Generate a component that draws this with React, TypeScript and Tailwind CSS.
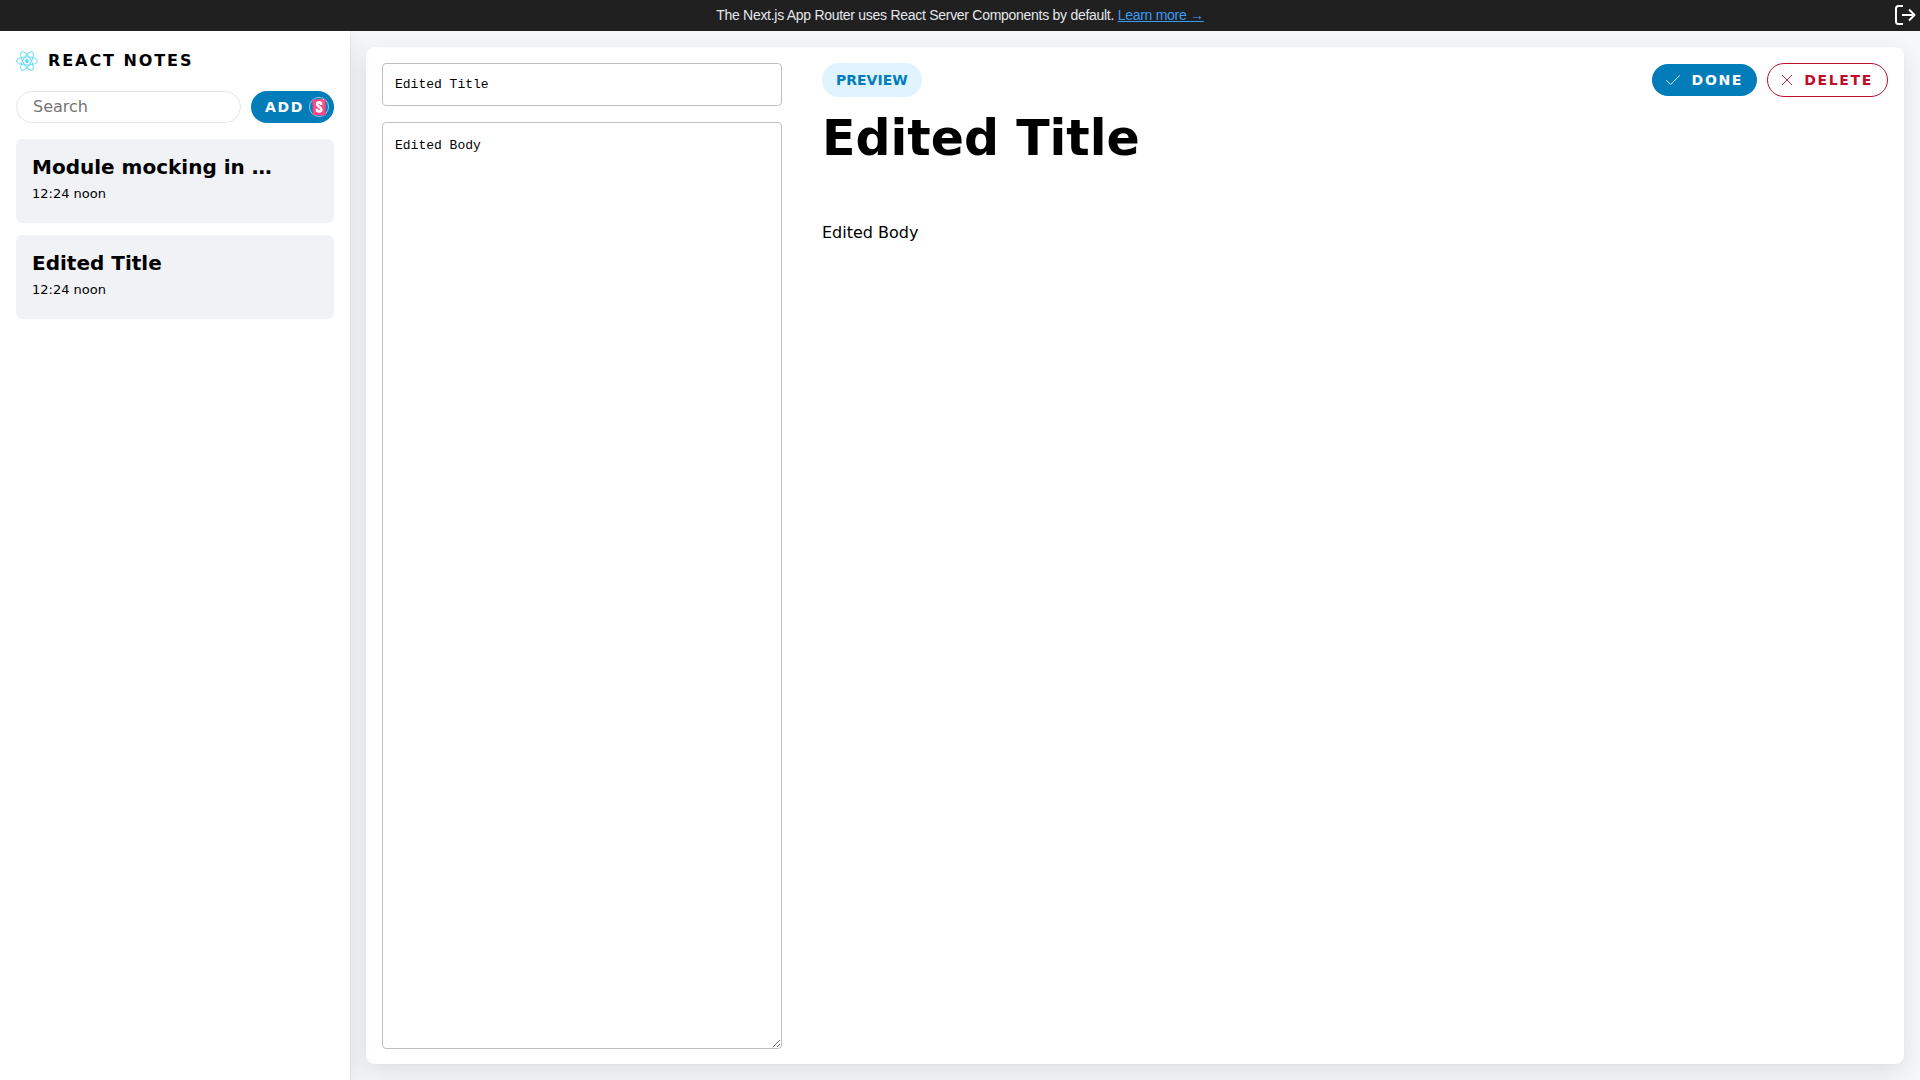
import React from "react";

const notes = [
  { title: "Module mocking in …", time: "12:24 noon" },
  { title: "Edited Title", time: "12:24 noon" },
];

function ReactLogo() {
  return (
    <svg className="h-5 w-[22px]" viewBox="-11.5 -10.23174 23 20.46348" aria-hidden="true">
      <circle r="2.05" fill="#61dafb" />
      <g stroke="#61dafb" fill="none">
        <ellipse rx="11" ry="4.2" />
        <ellipse rx="11" ry="4.2" transform="rotate(60)" />
        <ellipse rx="11" ry="4.2" transform="rotate(120)" />
      </g>
    </svg>
  );
}

function StorybookBadge() {
  return (
    <svg className="size-5" viewBox="0 0 20 20" aria-hidden="true">
      <circle cx="10" cy="10" r="9.5" fill="#037dba" stroke="#c9dcea" strokeWidth="0.8" />
      <path d="M3.4 2.7 16.6 1.8V18.6L4 18z" fill="#ff4785" />
      <path d="M13.8 2h1.200v1.400l-.6-.4-.6.4z" fill="#fff" />
      <path
        d="M12.2 8V7c0-1.100-.7-1.600-2-1.600s-2.100.6-2.100 1.800c0 2.800 4.200 2.500 4.200 5.300 0 1.300-.8 1.900-2.200 1.900s-2.200-.6-2.200-1.900v-.8"
        fill="none"
        stroke="#fff"
        strokeWidth="2.600"
      />
    </svg>
  );
}

function LogoutIcon() {
  return (
    <svg
      className="h-[22px] w-[22px]"
      viewBox="0 0 22 22"
      fill="none"
      stroke="#fff"
      strokeWidth="2"
      strokeLinejoin="round"
      aria-hidden="true"
    >
      <path d="M9 2H4.500Q2 2 2 4.500v13Q2 20 4.500 20H9" />
      <path d="M8 11h13M15 5.500 20.500 11 15 16.500" />
    </svg>
  );
}

export default function App() {
  return (
    <div className="flex h-screen flex-col bg-[#f5f7fa] font-['DejaVu_Sans',sans-serif] text-base text-black">
      <header className="relative z-20 flex h-[31px] shrink-0 items-start justify-center bg-[#202020] pt-[5px] font-['Liberation_Sans',sans-serif] text-sm tracking-[-0.02em] text-[#e4e6eb]">
        <p>
          The Next.js App Router uses React Server Components by default.{" "}
          <a href="#learn" className="text-[#3b9cf2] underline">
            Learn more →
          </a>
        </p>
        <button type="button" aria-label="Log out" className="absolute top-1 right-1 cursor-pointer">
          <LogoutIcon />
        </button>
      </header>

      <div className="flex min-h-0 flex-1 overflow-hidden">
        <aside className="z-10 flex w-[350px] shrink-0 flex-col bg-white px-4 pt-4 shadow-[0_8px_24px_rgba(0,0,0,0.1),0_2px_2px_rgba(0,0,0,0.1)]">
          <a href="#home" className="flex h-7 items-center gap-2.5">
            <ReactLogo />
            <strong className="tracking-[0.12em]">REACT NOTES</strong>
          </a>

          <div className="mt-4 flex items-center gap-2.5">
            <input
              type="search"
              aria-label="Search for a note by title"
              placeholder="Search"
              className="h-8 min-w-0 flex-1 rounded-full border border-[#e4e6eb] px-4 pb-0.5 placeholder:text-[#757575]"
            />
            <button
              type="button"
              className="flex h-8 items-center gap-[5px] rounded-full bg-[#037dba] pr-[5px] pl-3.5 text-sm font-bold tracking-[0.12em] text-white"
            >
              ADD
              <StorybookBadge />
            </button>
          </div>

          <ul className="mt-4 flex flex-col gap-3">
            {notes.map((note) => (
              <li key={note.title}>
                <button type="button" className="flex h-21 w-full flex-col rounded-md bg-[#f0f2f5] p-4 text-left">
                  <strong className="text-xl leading-6">{note.title}</strong>
                  <small className="mt-[5px] text-[13px] leading-5">{note.time}</small>
                </button>
              </li>
            ))}
          </ul>
        </aside>

        <main className="flex min-w-0 flex-1 p-4">
          <div className="flex min-w-0 flex-1 gap-10 rounded-lg bg-white p-4 shadow-[0_8px_24px_rgba(0,0,0,0.1),0_0_1px_rgba(0,0,0,0.1)]">
            <form className="-mb-px flex w-[400px] shrink-0 flex-col gap-4">
              <input
                type="text"
                aria-label="Enter a title for your note"
                defaultValue="Edited Title"
                className="h-[43px] rounded border border-[#bcc0c4] px-3 font-['Liberation_Mono',monospace] text-[13px]"
              />
              <textarea
                aria-label="Enter the body for your note"
                defaultValue="Edited Body"
                className="min-h-0 flex-1 rounded border border-[#bcc0c4] px-3 py-[15px] font-['Liberation_Mono',monospace] text-[13px] leading-4"
              />
            </form>

            <section className="min-w-0 flex-1">
              <div className="flex items-center justify-between">
                <span className="flex h-[34px] items-center rounded-full bg-[#26b7ff]/15 px-3.5 text-sm font-bold text-[#037dba]">
                  PREVIEW
                </span>
                <div className="flex items-center gap-2.5">
                  <button
                    type="button"
                    className="flex h-8 items-center gap-3 rounded-full bg-[#037dba] px-3.5 text-sm font-bold tracking-[0.12em] text-white"
                  >
                    <svg className="h-2.5 w-3.5" viewBox="0 0 14 10" fill="none" stroke="currentColor" strokeWidth="0.9" aria-hidden="true">
                      <path d="M0.300 5.300 4.700 9.500 13.700 0.400" />
                    </svg>
                    DONE
                  </button>
                  <button
                    type="button"
                    className="flex h-[34px] items-center gap-3 rounded-full border border-[#bd0d2a] px-3.5 text-sm font-bold tracking-[0.12em] text-[#bd0d2a]"
                  >
                    <svg className="size-2.5" viewBox="0 0 10 10" fill="none" stroke="currentColor" strokeWidth="0.9" aria-hidden="true">
                      <path d="M0 0 10 10M10 0 0 10" />
                    </svg>
                    DELETE
                  </button>
                </div>
              </div>
              <h1 className="mt-2.5 text-[49px] leading-16 font-bold">Edited Title</h1>
              <p className="mt-12 leading-7">Edited Body</p>
            </section>
          </div>
        </main>
      </div>
    </div>
  );
}
